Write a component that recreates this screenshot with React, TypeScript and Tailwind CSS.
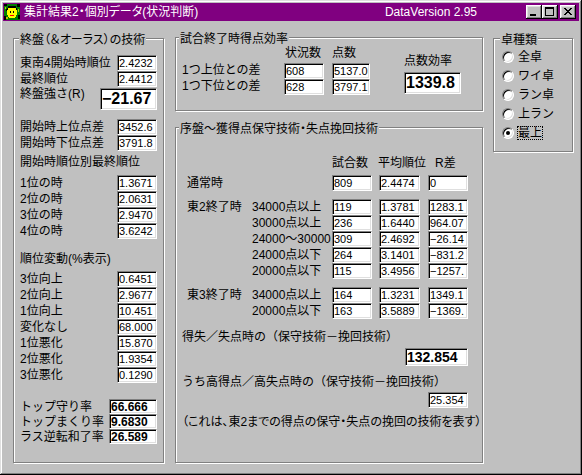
import React from 'react';

const sunken =
  'bg-white border border-t-[#808080] border-l-[#808080] border-r-white border-b-white shadow-[inset_1px_1px_0_#000,inset_-1px_-1px_0_#dfdfdf]';

const Field = ({
  v,
  className = 'w-[40px] h-[16px]',
  text = 'text-[11px]',
}: {
  v: string;
  className?: string;
  text?: string;
}) => (
  <div
    className={`${sunken} ${className} ${text} shrink-0 flex items-center pl-[1px] leading-[12px] whitespace-nowrap overflow-hidden`}
  >
    {v}
  </div>
);

const Group = ({
  title,
  className,
  titleClass,
  children,
}: {
  title: string;
  className: string;
  titleClass: string;
  children: React.ReactNode;
}) => (
  <div className={`relative border border-[#808080] shadow-[inset_1px_1px_0_#fff,1px_1px_0_#fff] ${className}`}>
    <span
      className={`absolute top-[-6px] bg-[#c0c0c0] px-[1px] leading-[14px] whitespace-nowrap [font-feature-settings:'palt'] ${titleClass}`}
    >
      {title}
    </span>
    {children}
  </div>
);

const Row = ({ label, children, className = 'h-[16px]' }: { label: string; children: React.ReactNode; className?: string }) => (
  <div className={`flex items-center justify-between ${className}`}>
    <span className="whitespace-nowrap">{label}</span>
    {children}
  </div>
);

const DataRow = ({ main = '', sub = '', a, b, c }: { main?: string; sub?: string; a: string; b: string; c: string }) => (
  <div className="flex h-[16px] items-center">
    <div className="w-[156px] flex pl-[11px] whitespace-nowrap">
      <span className="w-[65px]">{main}</span>
      <span>{sub}</span>
    </div>
    <Field v={a} />
    <Field v={b} className="ml-[7px] w-[41px] h-[16px]" />
    <Field v={c} className="ml-[8px] w-[40px] h-[16px]" />
  </div>
);

const Radio = ({ label, checked = false }: { label: string; checked?: boolean }) => (
  <div className="flex items-center h-[19px]">
    <div className="w-[12px] h-[12px] rounded-full bg-white border border-t-[#808080] border-l-[#808080] border-r-white border-b-white shadow-[inset_1px_1px_0_#000,inset_-1px_-1px_0_#dfdfdf] flex items-center justify-center">
      {checked && <div className="w-[4px] h-[4px] rounded-full bg-black" />}
    </div>
    {checked ? (
      <span className="ml-[3px] border border-dotted border-black leading-[12px]">{label}</span>
    ) : (
      <span className="ml-[4px] leading-[12px]">{label}</span>
    )}
  </div>
);

const CapBtn = ({ children, className = '' }: { children: React.ReactNode; className?: string }) => (
  <div
    className={`w-[16px] h-[14px] bg-[#c0c0c0] shadow-[inset_-1px_-1px_0_#000,inset_1px_1px_0_#fff,inset_-2px_-2px_0_#808080,inset_2px_2px_0_#dfdfdf] ${className}`}
  >
    <svg width="16" height="14" viewBox="0 0 16 14" shapeRendering="crispEdges">
      {children}
    </svg>
  </div>
);

const AppIcon = () => (
  <svg width="16" height="16" viewBox="0 0 16 16" shapeRendering="crispEdges">
    <rect width="16" height="16" fill="#008000" />
    <path d="M0 0h3v2H0zM13 0h3v3h-3zM0 12h2v4H0zM14 11h2v4h-2zM2 5h1v2H2z" fill="#000" />
    <path d="M1 3h1v2H1zM14 5h1v3h-1zM2 13h2v2H2z" fill="#c0c000" />
    <path d="M5 3h6v1h1v2h1v5h-1v2h-1v1H5v-1H4v-2H3V6h1V4h1z" fill="#ffff00" />
    <path d="M4 2h8v2h1v2h-1V4H4v2H3V4h1z" fill="#000" />
    <path d="M6 7h1v2H6zM9 7h1v2H9z" fill="#000" />
    <path d="M6 11h4v1H6z" fill="#ff0000" />
  </svg>
);

export default function App() {
  return (
    <div className="w-[582px] h-[475px] overflow-hidden bg-[#c0c0c0] p-[3px] shadow-[inset_-1px_-1px_0_#000,inset_1px_1px_0_#dfdfdf,inset_-2px_-2px_0_#808080,inset_2px_2px_0_#fff] font-['Liberation_Sans','Noto_Sans_CJK_JP',sans-serif] text-[12px] leading-[12px] text-black">
      {/* Title bar */}
      <div className="h-[18px] bg-[#800080] flex items-center pl-[1px] pr-[3px] text-white">
        <AppIcon />
        <span className="ml-[4px] whitespace-nowrap [font-feature-settings:'palt']">集計結果2・個別データ(状況判断)</span>
        <span className="ml-auto mr-[49px] whitespace-nowrap">DataVersion 2.95</span>
        <CapBtn>
          <rect x="4" y="9" width="6" height="2" fill="#000" />
        </CapBtn>
        <CapBtn>
          <path d="M3 2h9v2H3zM3 4h1v7H3zM11 4h1v7h-1zM3 10h9v1H3z" fill="#000" />
        </CapBtn>
        <CapBtn className="ml-[2px]">
          <path
            d="M4 3h2v1H4zM10 3h2v1h-2zM5 4h2v1H5zM9 4h2v1H9zM6 5h4v1H6zM7 6h2v1H7zM6 7h4v1H6zM5 8h2v1H5zM9 8h2v1H9zM4 9h2v1H4zM10 9h2v1h-2z"
            fill="#000"
          />
        </CapBtn>
      </div>

      {/* Body */}
      <div className="flex pt-[17px] pl-[10px]">
        {/* Left group */}
        <Group title="終盤（＆オーラス）の技術" className="w-[151px] h-[425px] shrink-0" titleClass="left-[5px]">
          <div className="flex flex-col pt-[16px] pl-[6px] pr-[6px]">
            <Row label="東南4開始時順位">
              <Field v="2.4232" />
            </Row>
            <Row label="最終順位">
              <Field v="2.4412" />
            </Row>
            <div className="flex justify-between items-start mt-[1px] h-[22px]">
              <span className="whitespace-nowrap">終盤強さ(R)</span>
              <Field v="−21.67" className="w-[57px] h-[22px]" text="text-[16px] font-bold" />
            </div>
            <div className="mt-[9px]">
              <Row label="開始時上位点差">
                <Field v="3452.6" />
              </Row>
              <Row label="開始時下位点差">
                <Field v="3791.8" />
              </Row>
            </div>
            <div className="mt-[3px] h-[16px] flex items-center whitespace-nowrap">開始時順位別最終順位</div>
            <div className="mt-[5px]">
              <Row label="1位の時">
                <Field v="1.3671" />
              </Row>
              <Row label="2位の時">
                <Field v="2.0631" />
              </Row>
              <Row label="3位の時">
                <Field v="2.9470" />
              </Row>
              <Row label="4位の時">
                <Field v="3.6242" />
              </Row>
            </div>
            <div className="mt-[12px] h-[16px] flex items-center whitespace-nowrap">順位変動(%表示)</div>
            <div className="mt-[4px]">
              <Row label="3位向上">
                <Field v="0.6451" />
              </Row>
              <Row label="2位向上">
                <Field v="2.9677" />
              </Row>
              <Row label="1位向上">
                <Field v="10.451" />
              </Row>
              <Row label="変化なし">
                <Field v="68.000" />
              </Row>
              <Row label="1位悪化">
                <Field v="15.870" />
              </Row>
              <Row label="2位悪化">
                <Field v="1.9354" />
              </Row>
              <Row label="3位悪化">
                <Field v="0.1290" />
              </Row>
            </div>
            <div className="mt-[16px]">
              <Row label="トップ守り率" className="h-[15px]">
                <Field v="66.666" className="w-[48px] h-[15px]" text="text-[12px] font-bold" />
              </Row>
              <Row label="トップまくり率" className="h-[15px]">
                <Field v="9.6830" className="w-[48px] h-[15px]" text="text-[12px] font-bold" />
              </Row>
              <Row label="ラス逆転和了率" className="h-[15px]">
                <Field v="26.589" className="w-[48px] h-[15px]" text="text-[12px] font-bold" />
              </Row>
            </div>
          </div>
        </Group>

        {/* Middle column */}
        <div className="ml-[11px] -mt-[1px] w-[308px] shrink-0 flex flex-col">
          <Group title="試合終了時得点効率" className="h-[74px]" titleClass="left-[3px]">
            <div className="flex pt-[7px] pl-[6px]">
              <div className="w-[102px] flex flex-col">
                <div className="h-[16px]" />
                <div className="mt-[1px] flex flex-col whitespace-nowrap">
                  <span className="h-[16px] flex items-center">1つ上位との差</span>
                  <span className="h-[16px] flex items-center">1つ下位との差</span>
                </div>
              </div>
              <div className="w-[40px] flex flex-col">
                <span className="h-[16px] flex items-center pl-[1px] whitespace-nowrap">状況数</span>
                <div className="mt-[2px]">
                  <Field v="608" />
                  <Field v="628" />
                </div>
              </div>
              <div className="ml-[8px] w-[38px] flex flex-col">
                <span className="h-[16px] flex items-center whitespace-nowrap">点数</span>
                <div className="mt-[2px]">
                  <Field v="5137.0" className="w-[38px] h-[16px]" />
                  <Field v="3797.1" className="w-[38px] h-[16px]" />
                </div>
              </div>
              <div className="ml-[34px] flex flex-col">
                <span className="mt-[8px] h-[16px] flex items-center whitespace-nowrap">点数効率</span>
                <Field v="1339.8" className="mt-[3px] w-[57px] h-[22px]" text="text-[16px] font-bold" />
              </div>
            </div>
          </Group>

          <Group title="序盤〜獲得点保守技術・失点挽回技術" className="mt-[16px] h-[336px]" titleClass="left-[3px]">
            <div className="flex flex-col pt-[27px] pr-[14px]">
              <div className="flex h-[16px] items-center whitespace-nowrap">
                <div className="w-[156px]" />
                <span className="w-[40px]">試合数</span>
                <span className="ml-[6px] w-[42px]">平均順位</span>
                <span className="ml-[8px] w-[40px] pl-[7px]">R差</span>
              </div>
              <div className="mt-[4px]">
                <DataRow main="通常時" a="809" b="2.4474" c="0" />
              </div>
              <div className="mt-[8px]">
                <DataRow main="東2終了時" sub="34000点以上" a="119" b="1.3781" c="1283.1" />
                <DataRow sub="30000点以上" a="236" b="1.6440" c="964.07" />
                <DataRow sub="24000〜30000" a="309" b="2.4692" c="−26.14" />
                <DataRow sub="24000点以下" a="264" b="3.1401" c="−831.2" />
                <DataRow sub="20000点以下" a="115" b="3.4956" c="−1257." />
              </div>
              <div className="mt-[8px]">
                <DataRow main="東3終了時" sub="34000点以上" a="164" b="1.3231" c="1349.1" />
                <DataRow sub="20000点以下" a="163" b="3.5889" c="−1369." />
              </div>
              <div className="mt-[10px] h-[16px] flex items-center pl-[6px] whitespace-nowrap">
                得失／失点時の（保守技術－挽回技術）
              </div>
              <div className="mt-[3px] flex justify-end">
                <Field v="132.854" className="w-[63px] h-[18px]" text="text-[14px] font-bold" />
              </div>
              <div className="mt-[8px] h-[16px] flex items-center pl-[6px] whitespace-nowrap">
                うち高得点／高失点時の（保守技術－挽回技術）
              </div>
              <div className="mt-[2px] flex justify-end">
                <Field v="25.354" />
              </div>
              <div className="mt-[6px] h-[16px] flex items-center pl-[6px] whitespace-nowrap [font-feature-settings:'palt']">
                （これは、東2までの得点の保守・失点の挽回の技術を表す）
              </div>
            </div>
          </Group>
        </div>

        {/* Right group */}
        <Group title="卓種類" className="ml-[10px] w-[80px] h-[114px] shrink-0" titleClass="left-[6px]">
          <div className="flex flex-col pt-[8px] pl-[8px]">
            <Radio label="全卓" />
            <Radio label="ワイ卓" />
            <Radio label="ラン卓" />
            <Radio label="上ラン" />
            <Radio label="最上" checked />
          </div>
        </Group>
      </div>
    </div>
  );
}
